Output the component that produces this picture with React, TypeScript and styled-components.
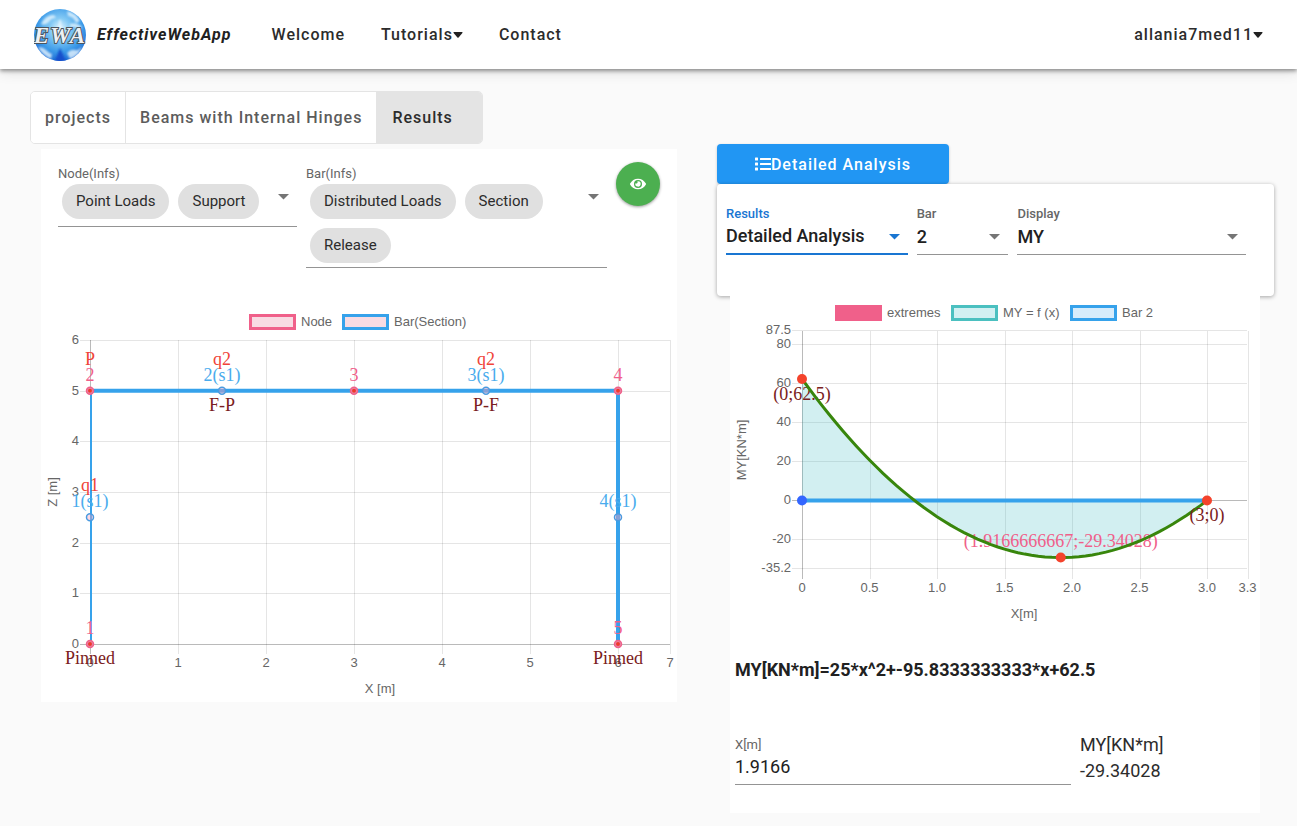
import React from "react";
import styled, { createGlobalStyle } from "styled-components";
import { FaEye, FaList } from "react-icons/fa";

const GlobalStyle = createGlobalStyle`
  *, *::before, *::after { box-sizing: border-box; }
  body {
    margin: 0;
    background: #fafafa;
    color: #212121;
    font-family: Roboto, "Liberation Sans", sans-serif;
    font-size: 16px;
  }
  button, input, select { font: inherit; color: inherit; }
`;

/* ---------- Top bar ---------- */

const TopBar = styled.header`
  display: flex;
  align-items: center;
  height: 69px;
  padding: 0 34px;
  background: #fff;
  box-shadow: 0 2px 4px rgba(0, 0, 0, 0.4), 0 4px 12px rgba(0, 0, 0, 0.1);
`;

const Brand = styled.a`
  display: flex;
  align-items: center;
  gap: 11px;
  margin-right: 40px;
  color: #212121;
  font-size: 16px;
  font-weight: 700;
  font-style: italic;
  letter-spacing: 1px;
  text-decoration: none;
`;

const NavLinks = styled.nav`
  display: flex;
  flex: 1;
  gap: 36px;
`;

const NavLink = styled.a`
  color: #2c2c2c;
  font-size: 16px;
  font-weight: 500;
  letter-spacing: 1px;
  text-decoration: none;
`;

const NavButton = styled.button`
  display: flex;
  align-items: center;
  padding: 0;
  border: 0;
  background: none;
  color: #2c2c2c;
  font-size: 16px;
  font-weight: 500;
  letter-spacing: 1px;
  cursor: pointer;
`;

function Caret() {
  return (
    <svg width="10" height="6" viewBox="0 0 10 6" aria-hidden="true">
      <path d="M1 0h8q1 0 .4 1L5.600 5.500q-.6.6-1.200 0L.6 1Q0 0 1 0z" fill="#212121" />
    </svg>
  );
}

function Logo() {
  return (
    <svg width="52" height="54" viewBox="0 0 52 54" aria-hidden="true">
      <defs>
        <radialGradient id="sky" cx="50%" cy="38%" r="62%">
          <stop offset="0" stopColor="#e4f6fe" />
          <stop offset="0.3" stopColor="#86cbf5" />
          <stop offset="0.7" stopColor="#3c9ae8" />
          <stop offset="1" stopColor="#1d6ad4" />
        </radialGradient>
        <filter id="soft"><feGaussianBlur stdDeviation="1" /></filter>
        <clipPath id="globe"><circle cx="26" cy="27" r="26" /></clipPath>
      </defs>
      <g clipPath="url(#globe)">
        <rect width="52" height="54" fill="url(#sky)" />
        <path d="M20 55l6-15 7 15z" fill="#1450cc" filter="url(#soft)" />
        <g fill="#e9f7fe" opacity="0.8" filter="url(#soft)">
          <path d="M7 16q4-9 13-9l2 3q-5 0-7 4-4 4-8 2z" />
          <path d="M33 3q9 2 13 10l-4 2q-2-6-8-7z" />
          <path d="M36 16q7-2 12 3l-2 3q-5-4-10-3z" />
          <path d="M4 39q5 0 8 3t6 4l-1 5Q8 47 4 39z" />
          <path d="M33 45q4-4 8-3t7-4q-2 9-12 13z" />
          <path d="M25 12l2 0 1 14h-4z" />
        </g>
      </g>
      <text
        x="26" y="35" textAnchor="middle" fontFamily="Liberation Serif, serif" fontSize="23"
        fontStyle="italic" fontWeight="700" fill="#eef1f3" stroke="#4c555e" strokeWidth="2"
        paintOrder="stroke"
      >EWA</text>
    </svg>
  );
}

/* ---------- Tabs ---------- */

const Tabs = styled.nav`
  display: flex;
  width: max-content;
  height: 53px;
  margin: 22px 0 0 30px;
  border-radius: 5px;
  overflow: hidden;
  border: 1px solid #e4e4e4;
`;

const Tab = styled.button<{ $active?: boolean }>`
  padding: ${(p) => (p.$active ? "0 29px 0 15px" : "0 14px")};
  border: 0;
  border-right: ${(p) => (p.$active ? "0" : "1px solid #e4e4e4")};
  background: ${(p) => (p.$active ? "#e4e4e4" : "#fff")};
  color: ${(p) => (p.$active ? "#2c2c2c" : "#5c5c5c")};
  font-size: 16px;
  font-weight: 500;
  letter-spacing: 1px;
  cursor: pointer;
`;

/* ---------- Page columns ---------- */

const Columns = styled.main`
  display: grid;
  grid-template-columns: 636fr 557fr;
  gap: 40px;
  align-items: start;
  padding: 0 23px 14px 41px;
`;

const ModelPanel = styled.section`
  margin-top: 5px;
  padding-top: 13px;
  background: #fff;
`;

const ModelFilters = styled.div`
  display: grid;
  grid-template-columns: 239fr 301fr 44px;
  gap: 9px;
  align-items: start;
  margin-bottom: 33px;
  padding: 0 17px;
`;

const ChipField = styled.div<{ $pad: number }>`
  display: flex;
  flex-direction: column;
  padding: 2px 0 ${(p) => p.$pad}px;
  border-bottom: 1px solid #949494;
`;

const FieldLabel = styled.label<{ $focused?: boolean; $strong?: boolean }>`
  color: ${(p) => (p.$focused ? "#1976d2" : "#666")};
  font-size: 13px;
  font-weight: ${(p) => (p.$strong ? 500 : 400)};
  line-height: 20px;
`;

const ChipButton = styled.button`
  display: flex;
  align-items: flex-start;
  width: 100%;
  padding: 0 8px 0 4px;
  border: 0;
  background: none;
  text-align: left;
  cursor: pointer;
`;

const ChipList = styled.span`
  display: flex;
  flex: 1;
  flex-wrap: wrap;
  gap: 9px;
`;

const Chip = styled.span`
  padding: 0 14px;
  border-radius: 18px;
  background: #e0e0e0;
  color: #2c2c2c;
  font-size: 15px;
  line-height: 35px;
`;

const ArrowSvg = styled.svg`
  flex: none;
  margin-top: 10px;
`;

function Arrow({ color = "#757575" }: { color?: string }) {
  return (
    <ArrowSvg width="11" height="6" viewBox="0 0 11 6" aria-hidden="true">
      <path d="M0 0h11L5.500 5.500z" fill={color} />
    </ArrowSvg>
  );
}

const ViewButton = styled.button`
  display: grid;
  place-items: center;
  width: 44px;
  height: 44px;
  padding: 0;
  border: 0;
  border-radius: 50%;
  background: #4caf50;
  color: #fff;
  box-shadow: 0 1px 3px rgba(0, 0, 0, 0.4);
  cursor: pointer;
`;

/* ---------- Result panel ---------- */

const AnalysisButton = styled.button`
  display: flex;
  align-items: center;
  justify-content: center;
  width: 232px;
  height: 40px;
  padding: 0;
  border: 0;
  border-radius: 4px;
  background: #2196f3;
  color: #fff;
  font-size: 16px;
  font-weight: 500;
  letter-spacing: 1px;
  box-shadow: 0 1px 3px rgba(0, 0, 0, 0.2);
  cursor: pointer;
`;

const SelectCard = styled.div`
  display: grid;
  grid-template-columns: 182fr 92fr 229fr;
  gap: 9px;
  align-items: start;
  height: 112px;
  padding: 20px 28px 0 9px;
  border-radius: 4px;
  background: #fff;
  box-shadow: 0 1px 4px rgba(0, 0, 0, 0.35);
`;

const SelectField = styled.div`
  display: flex;
  flex-direction: column;
`;

const SelectBox = styled.div<{ $focused?: boolean }>`
  display: grid;
  align-items: center;
  height: 31px;
  border-bottom: ${(p) => (p.$focused ? "2px solid #1976d2" : "1px solid #949494")};

  > * { grid-area: 1 / 1; }
  > svg { justify-self: end; margin: 0 8px 4px 0; pointer-events: none; }
`;

const Select = styled.select`
  width: 100%;
  height: 29px;
  padding: 0 24px 6px 0;
  border: 0;
  outline: 0;
  appearance: none;
  background: none;
  color: #212121;
  font-size: 18px;
  font-weight: 500;
`;

function Dropdown({ id, label, value, focused }: { id: string; label: string; value: string; focused?: boolean }) {
  return (
    <SelectField>
      <FieldLabel htmlFor={id} $focused={focused} $strong>{label}</FieldLabel>
      <SelectBox $focused={focused}>
        <Select id={id} defaultValue={value}><option>{value}</option></Select>
        <Arrow color={focused ? "#1976d2" : undefined} />
      </SelectBox>
    </SelectField>
  );
}

const ResultPanel = styled.section`
  margin: 0 14px 0 13px;
  padding-bottom: 28px;
  background: #fff;
`;

const Formula = styled.h2`
  margin: 28px 5px 50px;
  color: #212121;
  font-size: 18px;
  font-weight: 700;
  line-height: 24px;
`;

const ValueRow = styled.div`
  display: grid;
  grid-template-columns: 336fr 176fr;
  gap: 9px;
  padding: 0 4px 0 5px;
`;

const InputField = styled.div`
  display: flex;
  flex-direction: column;
  padding-top: 3px;
  border-bottom: 1px solid #949494;
`;

const TextInput = styled.input`
  width: 100%;
  height: 29px;
  padding: 0 0 6px;
  border: 0;
  outline: 0;
  background: none;
  font-size: 18px;
`;

const Output = styled.div`
  color: #2c2c2c;
  font-size: 18px;
  line-height: 26px;
`;

/* ---------- Charts ---------- */

const ChartSvg = styled.svg`
  display: block;
  width: 100%;
  height: auto;
`;

const AxisText = styled.text`
  fill: #666;
  font-family: "Liberation Sans", Arial, sans-serif;
  font-size: 13px;
`;

const Mark = styled.text<{ $tone: string }>`
  fill: ${(p) => p.$tone};
  font-family: "Liberation Serif", "Times New Roman", serif;
  font-size: 18px;
  text-anchor: middle;
`;

const GRID = "rgba(0,0,0,0.1)";
const ZERO = "rgba(0,0,0,0.27)";
const BLUE = "#36a2eb";
const PINK = "#f0608a";
const RED = "#f04438";
const MAROON = "#7a2020";
const SKY = "#4aaced";

type LegendItem = { x: number; stroke: string; fill: string; text: string };

function Legend({ y, items }: { y: number; items: LegendItem[] }) {
  return (
    <g>
      {items.map((i) => (
        <g key={i.text}>
          <rect x={i.x + 1.5} y={y + 1.5} width="44" height="13" fill={i.fill} stroke={i.stroke} strokeWidth="3" />
          <AxisText x={i.x + 52} y={y + 12}>{i.text}</AxisText>
        </g>
      ))}
    </g>
  );
}

type Tick = { at: number; text: string; zero?: boolean };
type AxesProps = { left: number; right: number; top: number; bottom: number; xs: Tick[]; ys: Tick[]; labelY: number };

function Axes({ left, right, top, bottom, xs, ys, labelY }: AxesProps) {
  return (
    <g>
      {xs.map((t) => (
        <g key={t.text}>
          <path d={`M${Math.round(t.at) + 0.5} ${top}V${bottom + 10}`} stroke={t.zero ? ZERO : GRID} />
          <AxisText x={t.at} y={labelY} textAnchor="middle">{t.text}</AxisText>
        </g>
      ))}
      {ys.map((t) => (
        <g key={t.text}>
          <path d={`M${left - 10} ${Math.round(t.at) + 0.5}H${right}`} stroke={t.zero ? ZERO : GRID} />
          <AxisText x={left - 11} y={t.at + 4} textAnchor="end">{t.text}</AxisText>
        </g>
      ))}
    </g>
  );
}

function ModelChart() {
  const px = (v: number) => 49 + v * 88;
  const py = (v: number) => 343 - v * (152 / 3);
  const xs = [0, 1, 2, 3, 4, 5, 6].map((v) => ({ at: px(v), text: String(v), zero: v === 0 }));
  xs.push({ at: 629, text: "7", zero: false });
  const ys = [0, 1, 2, 3, 4, 5, 6].map((v) => ({ at: py(v), text: String(v), zero: v === 0 }));
  const nodes = [[0, 0, "1"], [0, 5, "2"], [3, 5, "3"], [6, 5, "4"], [6, 0, "5"]] as const;
  const bars = [[0, 2.5, "1(s1)"], [1.5, 5, "2(s1)"], [4.5, 5, "3(s1)"], [6, 2.5, "4(s1)"]] as const;
  return (
    <ChartSvg viewBox="0 0 636 401" role="img" aria-label="Structure model">
      <Legend y={13} items={[
        { x: 208, stroke: PINK, fill: "#f8dbe3", text: "Node" },
        { x: 301, stroke: BLUE, fill: "#f8dbe3", text: "Bar(Section)" },
      ]} />
      <Axes left={49} right={629} top={39} bottom={343} xs={xs} ys={ys} labelY={366} />
      <AxisText x="339" y="392" textAnchor="middle">X [m]</AxisText>
      <AxisText transform="translate(16 191) rotate(-90)" textAnchor="middle">Z [m]</AxisText>
      <path d={`M50 ${py(5)}V343`} stroke={BLUE} strokeWidth="2" />
      <path d={`M49 ${py(5)}H577V343`} fill="none" stroke={BLUE} strokeWidth="4" />
      {bars.map(([x, y, t]) => (
        <g key={t}>
          <circle cx={px(x)} cy={py(y)} r="3.500" fill="rgba(255,160,185,0.4)" stroke="#4a9be0" strokeWidth="1.500" />
          <Mark $tone={SKY} x={px(x)} y={py(y) - 10}>{t}</Mark>
        </g>
      ))}
      {nodes.map(([x, y, t]) => (
        <g key={t}>
          <circle cx={px(x)} cy={py(y)} r="3.500" fill="#e58aa8" stroke={PINK} strokeWidth="1.500" />
          <circle cx={px(x)} cy={py(y)} r="2" fill="#f03a2c" />
          <Mark $tone={PINK} x={px(x)} y={py(y) - 10}>{t}</Mark>
        </g>
      ))}
      <Mark $tone={RED} x={px(0)} y={py(5) - 26}>P</Mark>
      <Mark $tone={RED} x={px(1.5)} y={py(5) - 26}>q2</Mark>
      <Mark $tone={RED} x={px(4.5)} y={py(5) - 26}>q2</Mark>
      <Mark $tone={RED} x={px(0)} y={py(2.5) - 26}>q1</Mark>
      <Mark $tone={MAROON} x={px(1.5)} y={py(5) + 20}>F-P</Mark>
      <Mark $tone={MAROON} x={px(4.5)} y={py(5) + 20}>P-F</Mark>
      <Mark $tone={MAROON} x={px(0)} y={py(0) + 20}>Pinned</Mark>
      <Mark $tone={MAROON} x={px(6)} y={py(0) + 20}>Pinned</Mark>
    </ChartSvg>
  );
}

function MomentChart() {
  const px = (v: number) => 72 + v * 135;
  const py = (v: number) => 204.5 - v * 1.944;
  const moment = (x: number) => 25 * x * x - 95.8333333333 * x + 62.5;
  const xs = ["0", "0.5", "1.0", "1.5", "2.0", "2.5", "3.0", "3.3"].map((t) => ({ at: px(Number(t)), text: t, zero: t === "0" }));
  const ys = ["87.5", "80", "60", "40", "20", "0", "-20", "-35.2"].map((t) => ({ at: py(Number(t)) - 0.5, text: t, zero: t === "0" }));
  const curve = Array.from({ length: 61 }, (_, i) => `${px(i / 20).toFixed(1)} ${py(moment(i / 20)).toFixed(1)}`).join("L");
  return (
    <ChartSvg viewBox="0 0 530 334" role="img" aria-label="Bending moment along bar 2">
      <Legend y={9} items={[
        { x: 105, stroke: PINK, fill: PINK, text: "extremes" },
        { x: 221, stroke: "#4bc0c0", fill: "#d2f0f2", text: "MY = f (x)" },
        { x: 340, stroke: BLUE, fill: "#d7ecfb", text: "Bar 2" },
      ]} />
      <Axes left={72} right={517} top={35} bottom={273} xs={xs} ys={ys} labelY={296} />
      <AxisText x="294" y="322" textAnchor="middle">X[m]</AxisText>
      <AxisText transform="translate(16 154) rotate(-90)" textAnchor="middle">MY[KN*m]</AxisText>
      <path d={`M72 ${py(0)}L${curve}Z`} fill="rgba(75,192,200,0.25)" />
      <path d={`M72 ${py(0)}H477`} stroke={BLUE} strokeWidth="4" />
      <Mark $tone={MAROON} x={px(0)} y={py(62.5) + 21}>(0;62.5)</Mark>
      <Mark $tone={PINK} x={px(1.91667)} y={py(-29.34) - 11}>(1.9166666667;-29.34028)</Mark>
      <path d={`M${curve}`} fill="none" stroke="#38860c" strokeWidth="3" />
      <Mark $tone={MAROON} x={px(3)} y={py(0) + 20}>(3;0)</Mark>
      <circle cx={px(0)} cy={py(0)} r="5" fill="#3366ff" />
      <circle cx={px(0)} cy={py(62.5)} r="5" fill="#f4432c" />
      <circle cx={px(1.91667)} cy={py(-29.34)} r="5" fill="#f4432c" />
      <circle cx={px(3)} cy={py(0)} r="5" fill="#f4432c" />
    </ChartSvg>
  );
}

function ChipSelect({ id, label, chips, pad }: { id: string; label: string; chips: string[]; pad: number }) {
  return (
    <ChipField $pad={pad}>
      <FieldLabel id={`${id}-label`} htmlFor={id}>{label}</FieldLabel>
      <ChipButton id={id} type="button" aria-haspopup="listbox" aria-labelledby={`${id}-label ${id}`}>
        <ChipList>{chips.map((c) => <Chip key={c}>{c}</Chip>)}</ChipList>
        <Arrow />
      </ChipButton>
    </ChipField>
  );
}

export default function App() {
  return (
    <>
      <GlobalStyle />
      <TopBar>
        <Brand href="#"><Logo />EffectiveWebApp</Brand>
        <NavLinks>
          <NavLink href="#welcome">Welcome</NavLink>
          <NavButton type="button">Tutorials<Caret /></NavButton>
          <NavLink href="#contact">Contact</NavLink>
        </NavLinks>
        <NavButton type="button">allania7med11<Caret /></NavButton>
      </TopBar>
      <Tabs>
        <Tab type="button">projects</Tab>
        <Tab type="button">Beams with Internal Hinges</Tab>
        <Tab type="button" $active aria-current="page">Results</Tab>
      </Tabs>
      <Columns>
        <ModelPanel>
          <ModelFilters>
            <ChipSelect id="node-infs" label="Node(Infs)" chips={["Point Loads", "Support"]} pad={7} />
            <ChipSelect id="bar-infs" label="Bar(Infs)" chips={["Distributed Loads", "Section", "Release"]} pad={4} />
            <ViewButton type="button" aria-label="View"><FaEye size={16} /></ViewButton>
          </ModelFilters>
          <ModelChart />
        </ModelPanel>
        <div>
          <AnalysisButton type="button"><FaList size={16} aria-hidden="true" />Detailed Analysis</AnalysisButton>
          <SelectCard>
            <Dropdown id="results" label="Results" value="Detailed Analysis" focused />
            <Dropdown id="bar" label="Bar" value="2" />
            <Dropdown id="display" label="Display" value="MY" />
          </SelectCard>
          <ResultPanel>
            <MomentChart />
            <Formula>MY[KN*m]=25*x^2+-95.8333333333*x+62.5</Formula>
            <ValueRow>
              <InputField>
                <FieldLabel htmlFor="x-position">X[m]</FieldLabel>
                <TextInput id="x-position" type="text" defaultValue="1.9166" />
              </InputField>
              <Output>
                <div>MY[KN*m]</div>
                <div>-29.34028</div>
              </Output>
            </ValueRow>
          </ResultPanel>
        </div>
      </Columns>
    </>
  );
}
